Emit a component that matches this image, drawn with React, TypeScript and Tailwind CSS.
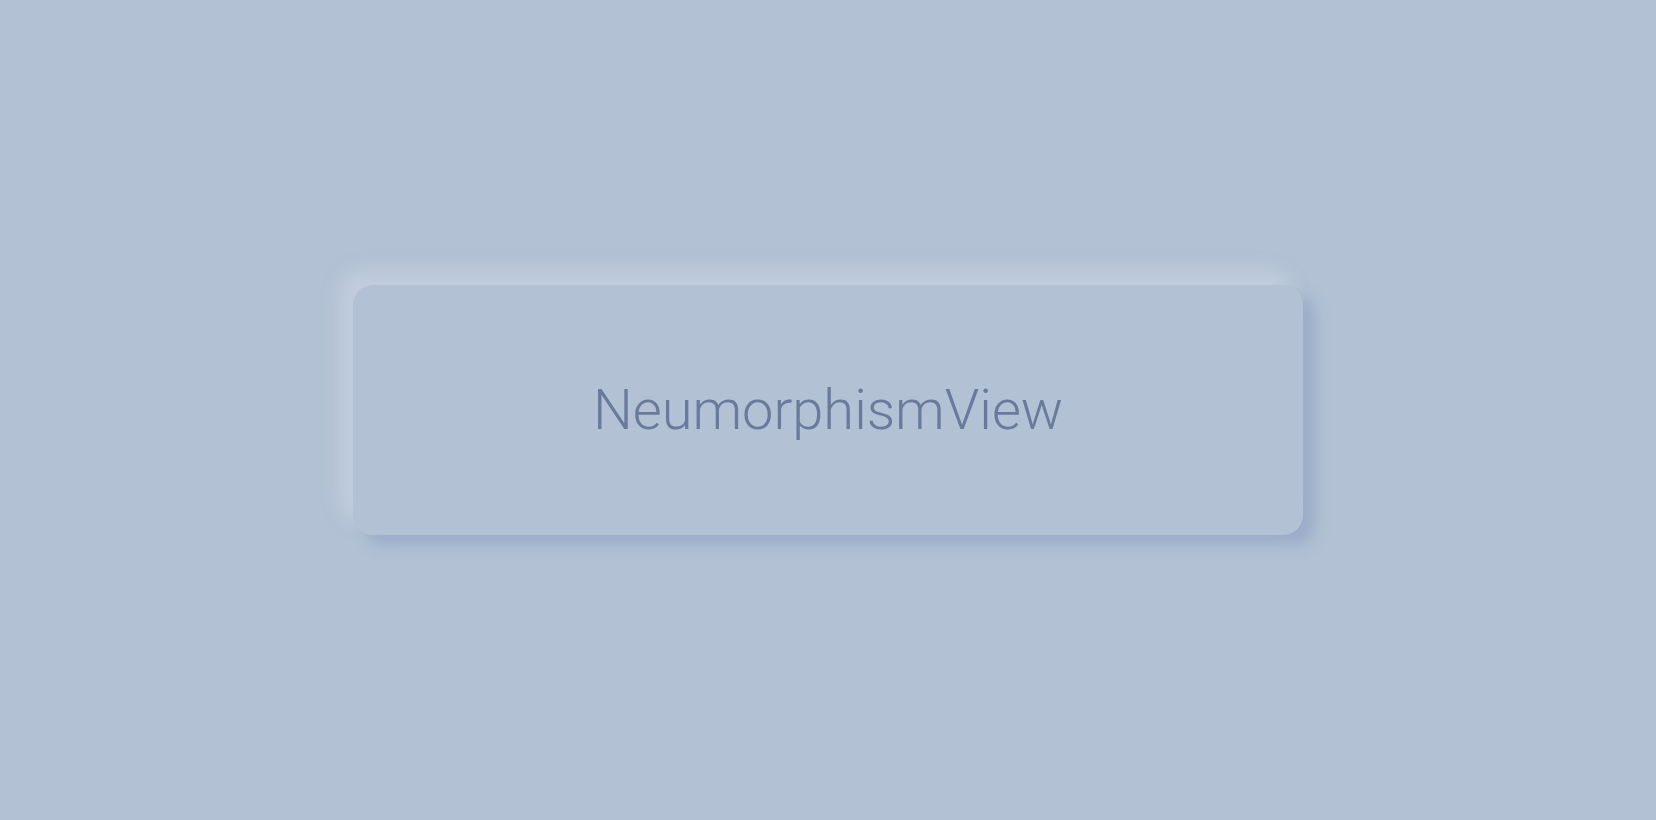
export default function App() {
  return (
    <div className="w-full h-[820px] bg-[#b2c1d4] flex items-center justify-center">
      <div className="w-[950px] h-[250px] rounded-[20px] bg-[#b2c1d4] shadow-[-13px_-14px_18px_rgba(196,207,223,0.85),12px_10px_14px_rgba(150,166,196,0.75)] flex items-center justify-center">
        <span className="font-['Roboto',sans-serif] font-light text-[56px] leading-none text-[#6a7a9c]">
          NeumorphismView
        </span>
      </div>
    </div>
  );
}
